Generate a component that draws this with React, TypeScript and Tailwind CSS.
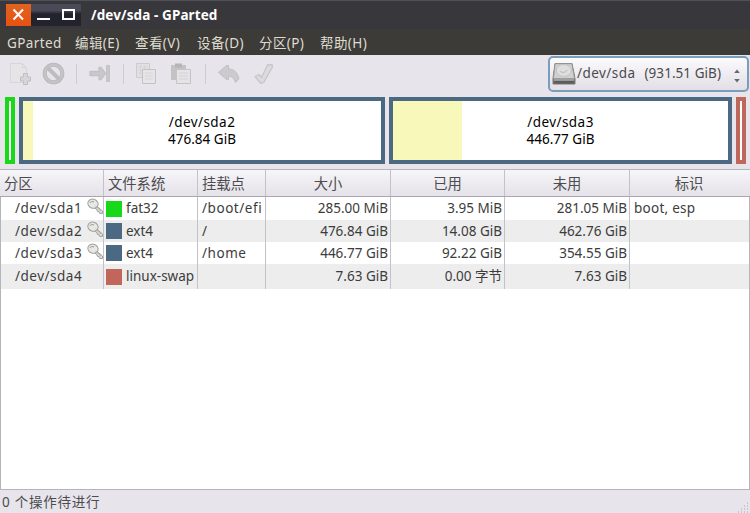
import type { ReactNode } from "react";

type Partition = {
  name: string;
  locked: boolean;
  swatch: string;
  fs: string;
  mount: string;
  size: string;
  used: string;
  unused: string;
  flags: string;
  height: string;
};

const MENU = [
  { label: "GParted", width: "w-[68px]" },
  { label: "编辑(E)", width: "w-[60px]" },
  { label: "查看(V)", width: "w-[62px]" },
  { label: "设备(D)", width: "w-[62px]" },
  { label: "分区(P)", width: "w-[61px]" },
  { label: "帮助(H)", width: "w-[60px]" },
];

const PARTITIONS: Partition[] = [
  { name: "/dev/sda1", locked: true, swatch: "bg-[#18d918]", fs: "fat32", mount: "/boot/efi", size: "285.00 MiB", used: "3.95 MiB", unused: "281.05 MiB", flags: "boot, esp", height: "h-[23px]" },
  { name: "/dev/sda2", locked: true, swatch: "bg-[#4b6983]", fs: "ext4", mount: "/", size: "476.84 GiB", used: "14.08 GiB", unused: "462.76 GiB", flags: "", height: "h-[22px]" },
  { name: "/dev/sda3", locked: true, swatch: "bg-[#4b6983]", fs: "ext4", mount: "/home", size: "446.77 GiB", used: "92.22 GiB", unused: "354.55 GiB", flags: "", height: "h-[22px]" },
  { name: "/dev/sda4", locked: false, swatch: "bg-[#c1665a]", fs: "linux-swap", mount: "", size: "7.63 GiB", used: "0.00 字节", unused: "7.63 GiB", flags: "", height: "h-[25px]" },
];

const HEAD_GRID = "grid grid-cols-[104px_94px_68px_125px_114px_125px_118px]";
const ROW_GRID = "grid grid-cols-[103px_94px_68px_125px_114px_125px_119px]";

function TitleBar() {
  return (
    <div className="flex h-[29px] items-start border-t border-[#50505a] bg-[#38373b] pl-1.5">
      <div className="mt-[3px] flex h-[22px] w-[75px] bg-linear-to-b from-[#4a4957] from-30% to-[#23232d] to-45%">
        <svg width="25" height="22" viewBox="0 0 25 22" className="bg-linear-to-b from-[#de6322] to-[#e9510e]">
          <path d="M7.500 5.500l9.500 10M17 5.500l-9.500 10" stroke="#fff" strokeWidth="2" />
        </svg>
        <svg width="50" height="22" viewBox="0 0 50 22" fill="none" stroke="#fff" strokeWidth="2">
          <path d="M6 15h13" />
          <path d="M32 6h11v9H32z" />
        </svg>
      </div>
      <h1 className="ml-[10px] mt-[4px] text-[13.500px] leading-5 font-bold tracking-[0.100px] text-white">/dev/sda - GParted</h1>
    </div>
  );
}

function MenuBar() {
  return (
    <div className="flex h-[26px] items-center bg-[#3c3b37] pt-[2px] pl-[7px] text-[13.500px] tracking-[0.400px] text-[#dfdbd2]">
      {MENU.map((m) => (
        <span key={m.label} className={`${m.width} whitespace-nowrap`}>{m.label}</span>
      ))}
    </div>
  );
}

function Tool({ width, children }: { width: string; children: ReactNode }) {
  return (
    <span className={`${width} flex justify-center`}>
      <svg width="24" height="24" viewBox="0 0 24 24" fill="none">{children}</svg>
    </span>
  );
}

function Separator() {
  return (
    <span className="flex w-[14px] justify-center">
      <span className="h-5 w-px bg-[#d0cdd2]" />
    </span>
  );
}

function DiskIcon() {
  return (
    <svg width="24" height="24" viewBox="0 0 24 24">
      <path d="M3 1.500h17l3 15v5.500H1v-5.500z" fill="#777" stroke="#777" />
      <path d="M3.200 1.800h16.600l2.700 14.700H1.500z" fill="#d0d0d0" stroke="#999" strokeWidth=".7" />
      <ellipse cx="11.800" cy="8.500" rx="7.500" ry="6" fill="#dedede" stroke="#c2c2c2" />
      <path d="M8 9c1 2 6 2 7-1" stroke="#b5b5b5" fill="none" />
      <path d="M2 17.200h20v1.500H2z" fill="#aaa" />
      <path d="M2 19h20v2.500H2z" fill="#5c5c5c" />
    </svg>
  );
}

function Toolbar() {
  return (
    <div className="flex h-[37px] items-center pl-[3px]">
      <Tool width="w-[33px]">
        <path d="M2.500 1.500h12l4 4v15h-16z" fill="#e6e4e7" stroke="#d8d6da" />
        <path d="M14.500 1.500v4h4" stroke="#d4d2d5" />
        <path d="M15.500 11.500h4v3.500h3v4h-3v3.500h-4V19h-3v-4h3z" fill="#d6d5d7" stroke="#c0bec2" strokeLinejoin="round" />
      </Tool>
      <Tool width="w-[33px]">
        <circle cx="12.500" cy="11.500" r="8.800" stroke="#b9b7ba" strokeWidth="4" />
        <circle cx="12.500" cy="11.500" r="8.800" stroke="#c5c3c6" strokeWidth="2.500" />
        <path d="M6.500 5.500l12 12" stroke="#bebcbf" strokeWidth="4" />
      </Tool>
      <Separator />
      <Tool width="w-[33px]">
        <path d="M2 9.500h9V5.500h2l4.500 6-4.500 6h-2v-4H2z" fill="#c9c7ca" stroke="#c3c1c4" strokeWidth="1.300" strokeLinejoin="round" />
        <path d="M18.500 3.500h3v16h-3z" fill="#c9c7ca" stroke="#c4c2c5" />
      </Tool>
      <Separator />
      <Tool width="w-[34px]">
        <path d="M1.500 1.500h13v14h-13z" fill="#e2e0e3" stroke="#cdcbce" />
        <path d="M3.500 5h9M3.500 8h9M3.500 11h9M5.500 3v10M9.500 3v10" stroke="#d6d4d7" />
        <path d="M7.500 7.500h13v14h-13z" fill="#e6e4e7" stroke="#c4c2c5" />
        <path d="M10 11h8M10 14h8M10 17h8" stroke="#d7d5d8" />
      </Tool>
      <Tool width="w-[34px]">
        <path d="M2 3h15v15H2z" fill="#c4c2c5" />
        <path d="M6 1.500h7v4H6z" fill="#b6b4b7" />
        <path d="M7.500 7.500h14v14h-14z" fill="#e5e3e6" stroke="#c5c3c6" />
        <path d="M10 11h9M10 14h9M10 17h9" stroke="#d4d2d5" />
      </Tool>
      <Separator />
      <Tool width="w-[34px]">
        <path d="M1.500 10.500l8-7h2V7c5.500 0 9.500 4 10.500 10l-3.500 3.500c-1-3.500-3-6-7-6.500V17.500h-2z" fill="#cccace" stroke="#c2c0c4" strokeLinejoin="round" />
      </Tool>
      <Tool width="w-[35px]">
        <path d="M3 14.500l4-2 2.500 3L15.500 3l4.500-.5.5 2.500-8.500 15-3 1.500z" fill="#dcdade" stroke="#c8c6ca" strokeWidth="1.300" strokeLinejoin="round" />
      </Tool>
      <button className="mr-px ml-auto flex h-[36px] w-[201px] items-center rounded-[5px] border-2 border-[#7b9dbc] bg-linear-to-b from-[#fbfafc] to-[#e2dfe6] pl-[2px] text-[13.500px] text-[#4a4a4e]">
        <DiskIcon />
        <span className="ml-px tracking-[0.450px]">/dev/sda</span>
        <span className="ml-[9px] whitespace-nowrap tracking-[0.050px]">(931.51 GiB)</span>
        <svg width="8" height="16" viewBox="0 0 8 16" className="mt-1 mr-[6px] ml-auto shrink-0" fill="#626b75">
          <path d="M4 1.500l2.800 3.500H1.200zM4 14.500l2.800-3.500H1.200z" />
        </svg>
      </button>
    </div>
  );
}

function MapLabel({ name, size }: { name: string; size: string }) {
  return (
    <div className="flex h-full flex-col items-center justify-center text-[13.500px] leading-[17px] text-black">
      <span className="tracking-[0.450px]">{name}</span>
      <span>{size}</span>
    </div>
  );
}

function DiskMap() {
  return (
    <div className="flex h-[77px] gap-1 pt-[5px] pb-[5px] pl-[5px]">
      <div className="h-[67px] w-[10px] border-4 border-[#18d918] bg-white" />
      <div className="h-[67px] w-[366px] border-4 border-[#4b6983] bg-linear-to-r from-[#f8f8ba] from-[10px] to-white to-[10px]">
        <MapLabel name="/dev/sda2" size="476.84 GiB" />
      </div>
      <div className="h-[67px] w-[343px] border-4 border-[#4b6983] bg-linear-to-r from-[#f8f8ba] from-[69px] to-white to-[69px]">
        <MapLabel name="/dev/sda3" size="446.77 GiB" />
      </div>
      <div className="h-[67px] w-[10px] border-4 border-[#c1665a] bg-white" />
    </div>
  );
}

function KeyIcon() {
  return (
    <svg width="17" height="17" viewBox="0 0 17 17" className="-mt-1 -mr-px shrink-0">
      <path d="M9 7.500l6.500 5.500v2.500l-3-.2-.5-1.800-1.700-.2-.3-1.700L7.500 10z" fill="#dededa" stroke="#a0a09c" strokeLinejoin="round" />
      <ellipse cx="6" cy="5.700" rx="5.200" ry="4.500" transform="rotate(20 6 5.700)" fill="#e8e8e4" stroke="#a0a09c" />
      <path d="M3 5c0-1.500 3-2 4-.8" fill="none" stroke="#999" />
      <path d="M8.500 8l5.500 5" stroke="#b5b5b1" />
    </svg>
  );
}

function PartitionTable() {
  const cell = "flex items-center border-r border-[#c4c2c9] whitespace-nowrap";
  const head = "flex items-center border-r border-[#c4c1ca] pt-[2px]";
  return (
    <div className="h-[321px] border border-[#b5b3bd] bg-white text-[13.500px] text-[#3c3c3c]">
      <div className={`${HEAD_GRID} -ml-px h-[27px] w-[750px] border-b border-[#a9a6b0] bg-linear-to-b from-[#f6f5f8] to-[#e5e2e9] text-[14.300px] text-[#4c4c50]`}>
        <span className={`${head} pl-1`}>分区</span>
        <span className={`${head} pl-1`}>文件系统</span>
        <span className={`${head} pl-1`}>挂载点</span>
        <span className={`${head} justify-center`}>大小</span>
        <span className={`${head} justify-center`}>已用</span>
        <span className={`${head} justify-center`}>未用</span>
        <span className="flex items-center justify-center pt-[2px]">标识</span>
      </div>
      {PARTITIONS.map((p) => (
        <div key={p.name} className={`${ROW_GRID} ${p.height} even:bg-white odd:bg-[#ededed]`}>
          <span className={`${cell} justify-between pl-[14px] tracking-[0.500px]`}>
            {p.name}
            {p.locked && <KeyIcon />}
          </span>
          <span className={`${cell} pl-[2px]`}>
            <i className={`${p.swatch} mr-1 size-4`} />
            {p.fs}
          </span>
          <span className={`${cell} pl-1 tracking-[0.550px]`}>{p.mount}</span>
          <span className={`${cell} justify-end pr-[2px]`}>{p.size}</span>
          <span className={`${cell} justify-end pr-[2px]`}>{p.used}</span>
          <span className={`${cell} justify-end pr-[2px]`}>{p.unused}</span>
          <span className="flex items-center pl-1 tracking-[0.250px]">{p.flags}</span>
        </div>
      ))}
    </div>
  );
}

export default function App() {
  return (
    <div className="flex h-[513px] w-[750px] flex-col overflow-hidden bg-[#e7e4eb] font-['Noto_Sans','Noto_Sans_CJK_SC',sans-serif]">
      <TitleBar />
      <MenuBar />
      <Toolbar />
      <DiskMap />
      <PartitionTable />
      <div className="flex flex-1 items-center justify-between pl-[2px] text-[13.500px] text-[#4c4c50]">
        <span className="mt-[2px] tracking-[0.750px]">0 个操作待进行</span>
        <svg width="12" height="12" viewBox="0 0 12 12" className="self-end" stroke="#a9a7b0" strokeDasharray="1 2">
          <path d="M9 2h3M6 5h6M3 8h9M0 11h12" />
        </svg>
      </div>
    </div>
  );
}
